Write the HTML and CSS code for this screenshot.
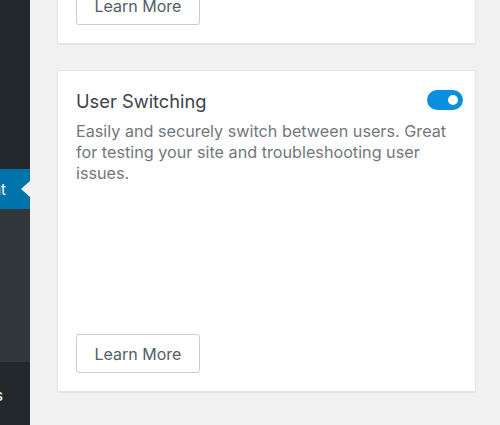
FILE: index.html
```html
<!DOCTYPE html>
<html lang="en">
<head>
<meta charset="utf-8">
<title>Modules</title>
<link rel="stylesheet" href="styles.css">
</head>
<body>
<div class="layout">
  <nav class="sidebar">
    <div class="menu-top"></div>
    <div class="menu-item current"><span class="label">Management</span><span class="notch"></span></div>
    <div class="submenu"></div>
    <div class="menu-item"><span class="label">Settings</span></div>
  </nav>
  <main class="content">
    <section class="card card-first">
      <div class="card-footer">
        <button class="btn">Learn More</button>
      </div>
    </section>
    <section class="card card-tall">
      <header class="card-header">
        <h2 class="card-title">User Switching</h2>
        <span class="toggle" role="switch" aria-checked="true"><span class="knob"></span></span>
      </header>
      <p class="card-desc">Easily and securely switch between users. Great for testing your site and troubleshooting user issues.</p>
      <div class="card-footer">
        <button class="btn">Learn More</button>
      </div>
    </section>
  </main>
</div>
</body>
</html>
```

FILE: styles.css
```css
html, body {
  margin: 0;
  padding: 0;
  height: 100%;
  overflow: hidden;
}
body {
  background: #f1f1f1;
  font-family: Inter, "Noto Sans", "Liberation Sans", sans-serif;
  -webkit-font-smoothing: antialiased;
}
.layout {
  display: flex;
  height: 425px;
}
.sidebar {
  width: 30px;
  flex: none;
  background: #23282d;
  display: flex;
  flex-direction: column;
  overflow: hidden;
}
.menu-top {
  height: 169px;
  flex: none;
}
.menu-item {
  position: relative;
  height: 40px;
  flex: none;
  display: flex;
  align-items: center;
  justify-content: flex-end;
  padding-right: 24px;
  color: #fff;
  font-size: 15px;
  white-space: nowrap;
}
.menu-item.current {
  background: #0073aa;
}
.notch {
  position: absolute;
  right: 0;
  top: 50%;
  margin-top: -8px;
  width: 0;
  height: 0;
  border-top: 8px solid transparent;
  border-bottom: 8px solid transparent;
  border-right: 9px solid #f1f1f1;
}
.submenu {
  height: 153px;
  flex: none;
  background: #32373c;
}
.sidebar .menu-item:last-child {
  height: 66px;
  color: #eee;
  font-size: 16px;
  font-weight: 500;
  padding-right: 27px;
}
.content {
  flex: 1;
  padding-left: 27px;
  padding-right: 24px;
  display: flex;
  flex-direction: column;
}
.card {
  background: #fff;
  border: 1px solid #e2e4e7;
  border-radius: 2px;
  box-shadow: 0 1px 1px rgba(0, 0, 0, 0.06);
  padding: 18px;
  box-sizing: border-box;
  display: flex;
  flex-direction: column;
}
.card-first {
  margin-top: -33px;
}
.card-tall {
  margin-top: 26px;
  height: 322px;
}
.card-header {
  display: flex;
  align-items: flex-start;
  justify-content: space-between;
}
.card-title {
  margin: 0;
  font-size: 18.3px;
  line-height: 24px;
  font-weight: 400;
  color: #3c434a;
}
.toggle {
  width: 36px;
  height: 20px;
  border-radius: 10px;
  background: #0a8ee0;
  margin-right: -6px;
  margin-top: 1px;
  display: flex;
  align-items: center;
  justify-content: flex-end;
  padding-right: 5px;
  box-sizing: border-box;
}
.knob {
  width: 10px;
  height: 10px;
  border-radius: 50%;
  background: #fff;
}
.card-desc {
  margin: 8px 0 0;
  font-size: 16.2px;
  line-height: 21px;
  color: #72777c;
}
.card-footer {
  margin-top: auto;
}
.btn {
  font-family: inherit;
  font-size: 16px;
  color: #555d66;
  background: #fff;
  border: 1px solid #ccc;
  border-radius: 3px;
  width: 124px;
  height: 39px;
  padding: 0;
  cursor: pointer;
}
```
